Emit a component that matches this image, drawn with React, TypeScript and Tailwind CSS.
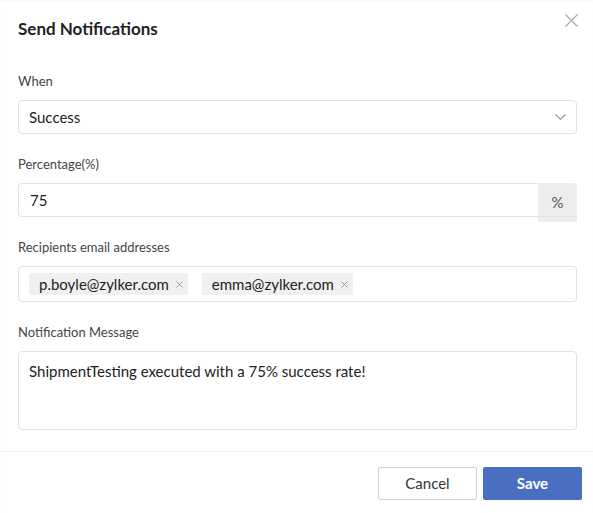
import React from "react";

function CloseIcon() {
  return (
    <svg width="13" height="13" viewBox="0 0 13 13" fill="none">
      <path d="M0.5 0.5L12.5 12.5M12.5 0.5L0.5 12.5" stroke="#a8a8a8" strokeWidth="1.2" />
    </svg>
  );
}

function Chevron() {
  return (
    <svg width="11" height="6" viewBox="0 0 11 6" fill="none">
      <path d="M0.5 0.5L5.5 5.3L10.5 0.5" stroke="#8a8a8a" strokeWidth="1.1" />
    </svg>
  );
}

function TagX() {
  return (
    <svg width="7" height="7" viewBox="0 0 7 7" fill="none">
      <path d="M0.5 0.5L6.5 6.5M6.5 0.5L0.5 6.5" stroke="#9a9a9a" strokeWidth="1" />
    </svg>
  );
}

function Field({ label, children }: { label: string; children: React.ReactNode }) {
  return (
    <div className="mt-[22px] flex flex-col">
      <div className="h-[17px] text-[13px] leading-[17px] text-[#454545]">{label}</div>
      <div className="mt-[10px]">{children}</div>
    </div>
  );
}

function Tag({ email }: { email: string }) {
  return (
    <div className="flex h-[22px] items-center gap-[7px] rounded-[2px] bg-[#f0f0f0] pl-[10px] pr-[5px]">
      <span className="text-[15px] leading-[20px] text-[#222]">{email}</span>
      <TagX />
    </div>
  );
}

export default function App() {
  return (
    <div className="flex h-[513px] w-[593px] flex-col bg-white font-['Lato','Noto_Sans',sans-serif] shadow-[inset_0_2px_2px_rgba(0,0,0,0.025)]">
      <div className="relative px-[18px] pt-[18px]">
        <h1 className="h-[22px] text-[17px] font-bold leading-[22px] text-[#1f1f1f]">Send Notifications</h1>
        <button className="absolute right-[15px] top-[14px] flex">
          <CloseIcon />
        </button>
      </div>

      <div className="mt-[11px] flex flex-col pl-[18px] pr-[16px]">
        <Field label="When">
          <div className="flex h-[34px] items-center justify-between rounded-[4px] border border-[#e2e2e2] pl-[10px] pr-[10px]">
            <span className="text-[15px] leading-[20px] text-[#222]">Success</span>
            <Chevron />
          </div>
        </Field>

        <Field label="Percentage(%)">
          <div className="flex h-[34px] items-start">
            <div className="flex h-[34px] flex-1 items-center rounded-l-[4px] border border-r-0 border-[#e2e2e2] pl-[11px]">
              <span className="text-[15px] leading-[20px] text-[#222]">75</span>
            </div>
            <div className="relative flex h-[39px] w-[39px] items-center justify-center rounded-tr-[4px] bg-[#ededed] pb-[1px]">
              <span className="text-[15px] leading-[20px] text-[#555]">%</span>
              <div className="absolute left-0 right-0 top-[33px] h-px bg-[#e4e4e4]" />
            </div>
          </div>
        </Field>

        <Field label="Recipients email addresses">
          <div className="flex h-[36px] items-start gap-[14px] rounded-[4px] border border-[#e2e2e2] pl-[10px] pt-[6px]">
            <Tag email="p.boyle@zylker.com" />
            <Tag email="emma@zylker.com" />
          </div>
        </Field>

        <Field label="Notification Message">
          <div className="h-[79px] rounded-[4px] border border-[#e2e2e2] pl-[10px] pt-[9px]">
            <p className="text-[15px] leading-[20px] text-[#222]">ShipmentTesting executed with a 75% success rate!</p>
          </div>
        </Field>
      </div>

      <div className="mt-[21px] flex justify-end gap-[6px] border-t border-[#f0f0f0] pr-[11px] pt-[15px]">
        <button className="flex h-[33px] w-[99px] items-center justify-center rounded-[2px] border border-[#cfcfcf] bg-white text-[15px] text-[#333]">
          Cancel
        </button>
        <button className="flex h-[33px] w-[99px] items-center justify-center rounded-[2px] bg-[#4a6fc0] text-[15px] font-bold text-white">
          Save
        </button>
      </div>
    </div>
  );
}
